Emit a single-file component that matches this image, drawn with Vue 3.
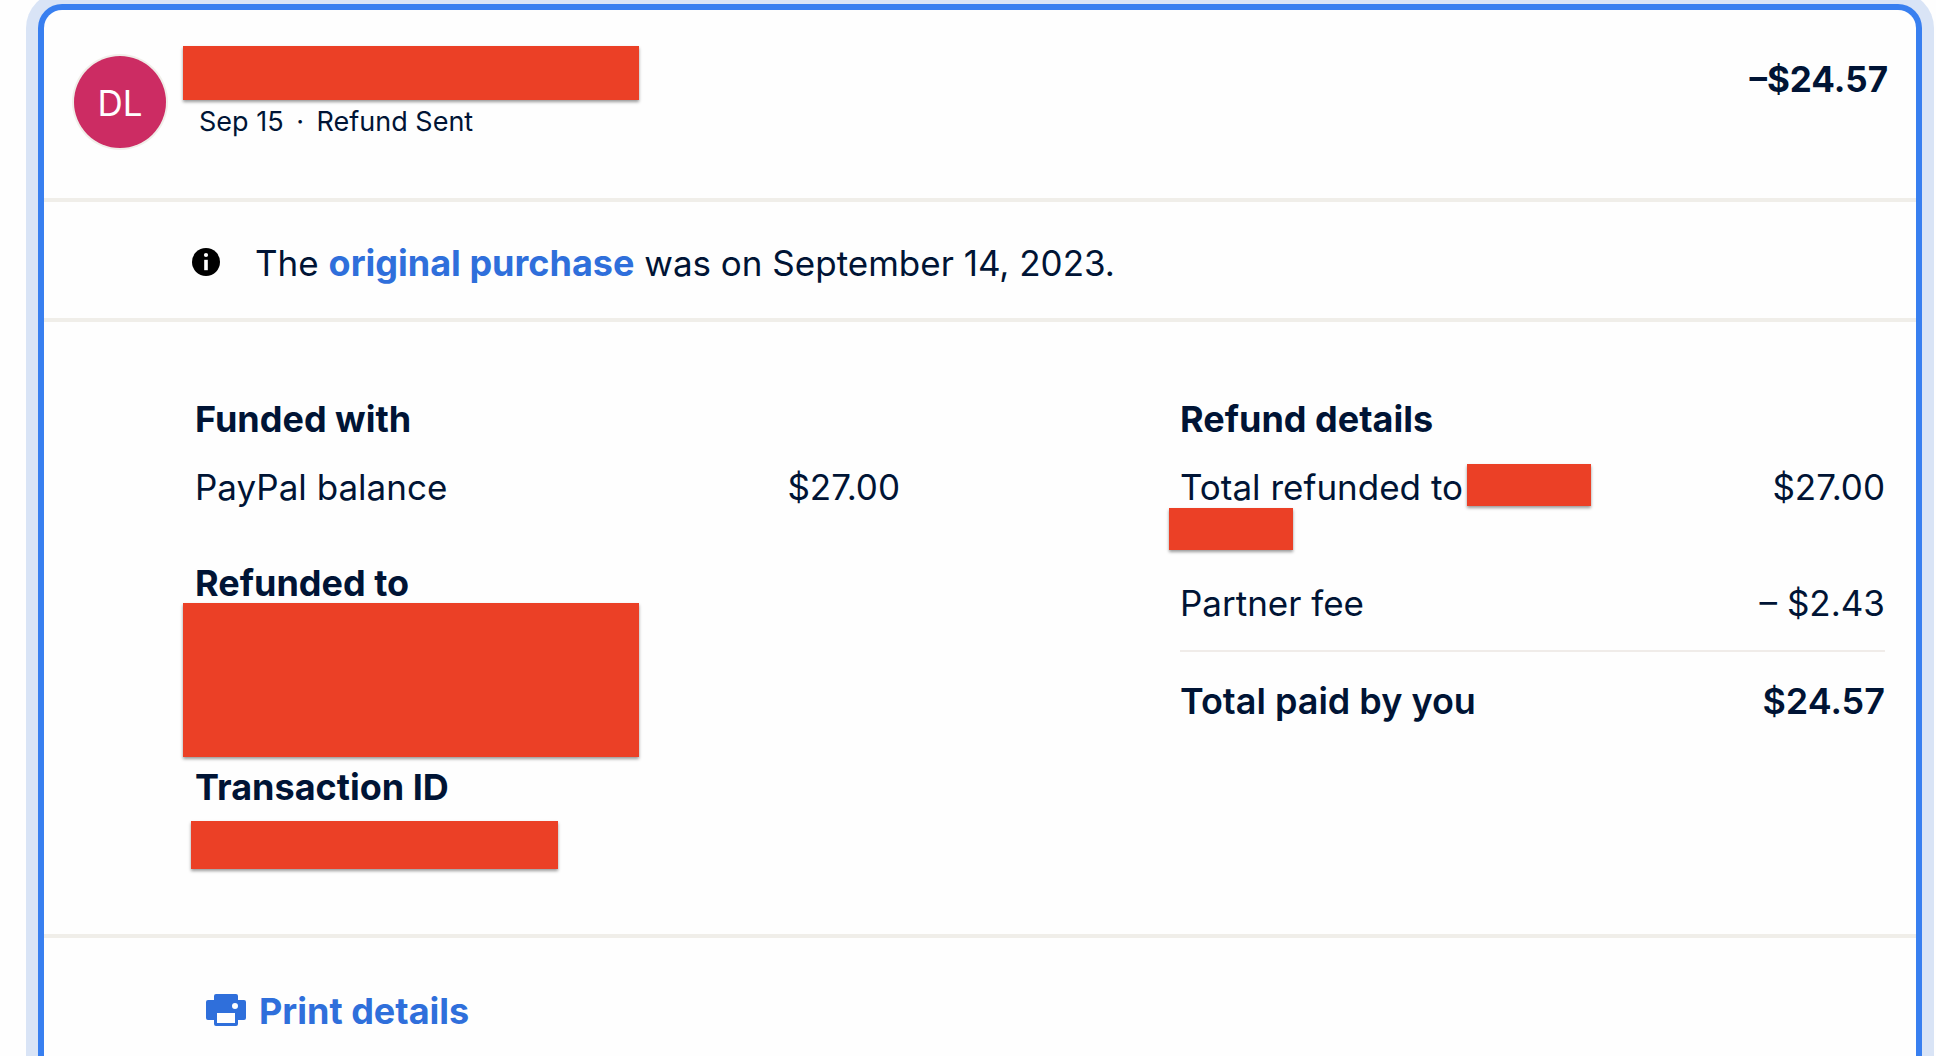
<script setup>
const transaction = {
  initials: 'DL',
  date: 'Sep 15',
  type: 'Refund Sent',
  amount: '–$24.57',
  purchaseDate: 'September 14, 2023',
}

function printDetails() {
  window.print()
}
</script>

<template>
  <main class="page">
    <article class="card">
      <header class="summary">
        <div class="avatar">{{ transaction.initials }}</div>
        <div class="who">
          <div class="redacted name"></div>
          <p class="meta">
            {{ transaction.date }} <span class="dot">·</span> {{ transaction.type }}
          </p>
        </div>
        <strong class="amount">{{ transaction.amount }}</strong>
      </header>

      <section class="notice">
        <svg class="info" viewBox="0 0 28 28" aria-hidden="true">
          <circle cx="14" cy="14" r="14" fill="#000" />
          <circle cx="14" cy="7" r="2.1" fill="#fff" />
          <path d="M12.2 11.8h3.6v10.4h-3.6z" fill="#fff" />
        </svg>
        <p>
          The <a href="#purchase">original purchase</a> was on
          {{ transaction.purchaseDate }}.
        </p>
      </section>

      <section class="details">
        <div class="column">
          <h2>Funded with</h2>
          <dl class="row">
            <dt>PayPal balance</dt>
            <dd>$27.00</dd>
          </dl>
          <h2 class="next">Refunded to</h2>
          <div class="redacted address"></div>
          <h2 class="id-title">Transaction ID</h2>
          <div class="redacted id"></div>
        </div>

        <div class="column">
          <h2>Refund details</h2>
          <dl class="row">
            <dt>
              <span class="recipient">
                Total refunded to
                <span class="redacted word first"></span>
              </span>
              <span class="redacted word second"></span>
            </dt>
            <dd>$27.00</dd>
          </dl>
          <dl class="row fee">
            <dt>Partner fee</dt>
            <dd>– $2.43</dd>
          </dl>
          <dl class="row total">
            <dt>Total paid by you</dt>
            <dd>$24.57</dd>
          </dl>
        </div>
      </section>

      <footer class="actions">
        <button type="button" class="print" @click="printDetails">
          <svg class="printer" viewBox="0 0 40 32" aria-hidden="true">
            <path
              fill="currentColor"
              fill-rule="evenodd"
              d="M10 0h20a2 2 0 0 1 2 2v4h6a2 2 0 0 1 2 2v16a2 2 0 0 1-2 2h-6v4a2 2 0 0 1-2 2H10a2 2 0 0 1-2-2v-4H2a2 2 0 0 1-2-2V8a2 2 0 0 1 2-2h6V2a2 2 0 0 1 2-2zM11 19v10h18V19zM29 9a3 3 0 1 0 0 6 3 3 0 0 0 0-6z"
            />
          </svg>
          Print details
        </button>
      </footer>
    </article>
  </main>
</template>

<style>
body {
  margin: 0;
  background: #fefefe;
}
</style>

<style scoped>
.page {
  box-sizing: border-box;
  min-height: 100vh;
  display: flex;
  padding: 4px 14px 0 38px;
  overflow: hidden;
  color: #001435;
  font-family: Inter, "Liberation Sans", Arial, sans-serif;
  font-size: 35px;
  line-height: 40px;
}

.card {
  flex: 1;
  border: 6px solid #387ff0;
  border-bottom: 0;
  border-radius: 24px 24px 0 0;
  box-shadow: 0 0 0 12px #d9e4f6;
  background: #fefefe;
}

p,
h2,
dl,
dd {
  margin: 0;
}

h2 {
  font-size: 36px;
  line-height: 40px;
  font-weight: 700;
}

.redacted {
  background: #eb4026;
  box-shadow: 0 2px 3px rgba(0, 0, 0, 0.4);
}

.summary {
  display: flex;
  align-items: flex-start;
  padding: 36px 28px 50px;
  border-bottom: 4px solid #f0eee9;
}

.avatar {
  width: 92px;
  height: 92px;
  margin: 10px 17px 0 2px;
  border-radius: 50%;
  background: #cc2c63;
  box-shadow: 0 0 0 2px #f0eee9;
  color: #fff;
  font-size: 35px;
  line-height: 94px;
  text-align: center;
}

.name {
  width: 456px;
  height: 54px;
}

.meta {
  margin: 6px 0 0 16px;
  font-size: 27px;
  line-height: 32px;
}

.dot {
  margin: 0 5px;
}

.amount {
  margin: 13px 0 0 auto;
}

.notice {
  display: flex;
  align-items: flex-start;
  gap: 35px;
  padding: 41px 32px 35px 148px;
  border-bottom: 4px solid #f0eee9;
}

.info {
  width: 28px;
  height: 28px;
  margin-top: 5px;
}

.notice a {
  color: #2f6fdb;
  font-size: 36px;
  font-weight: 700;
  text-decoration: none;
}

.details {
  display: grid;
  grid-template-columns: 1fr 1fr;
  column-gap: 280px;
  padding: 77px 31px 65px 151px;
  border-bottom: 4px solid #f0eee9;
}

.row {
  display: flex;
  justify-content: space-between;
  margin-top: 28px;
}

.next {
  margin-top: 56px;
}

.address {
  width: 456px;
  height: 154px;
  margin-left: -12px;
}

.id-title {
  margin-top: 10px;
}

.id {
  width: 367px;
  height: 48px;
  margin: 14px 0 0 -4px;
}

.recipient {
  display: flex;
  height: 41px;
}

.word {
  display: block;
  width: 124px;
  height: 42px;
}

.first {
  margin: -3px 0 0 4px;
}

.second {
  margin-left: -11px;
}

.fee {
  margin-top: 33px;
  padding-bottom: 27px;
  border-bottom: 2px solid #f0ece9;
}

.total {
  margin-top: 29px;
  font-size: 36px;
  font-weight: 600;
}

.actions {
  padding: 53px 32px 24px 162px;
}

.print {
  display: flex;
  align-items: flex-start;
  gap: 13px;
  padding: 0;
  border: 0;
  background: none;
  color: #2f6fdb;
  font: inherit;
  font-size: 36px;
  font-weight: 700;
  cursor: pointer;
}

.printer {
  width: 40px;
  height: 32px;
  margin-top: 3px;
}
</style>
